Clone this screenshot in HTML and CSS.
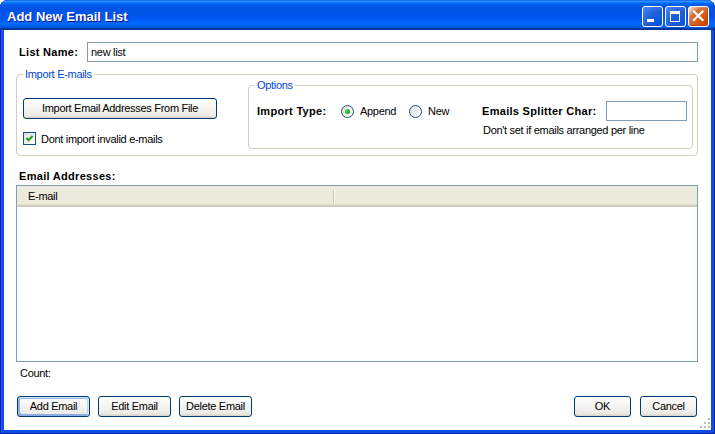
FILE: index.html
```html
<!DOCTYPE html>
<html>
<head>
<meta charset="utf-8">
<title>Add New Email List</title>
<link rel="stylesheet" href="styles.css">
</head>
<body>
<div class="window">
  <div class="titlebar">
    <span class="title">Add New Email List</span>
    <div class="controls">
      <button class="tbtn blue" aria-label="Minimize"><svg width="19" height="19" viewBox="0 0 19 19"><rect x="4" y="12" width="7" height="3" fill="#fff"/></svg></button>
      <button class="tbtn blue" aria-label="Maximize"><svg width="19" height="19" viewBox="0 0 19 19"><path d="M4 4h10v11H4z M5 7v7h8V7z" fill="#fff" fill-rule="evenodd"/></svg></button>
      <button class="tbtn red" aria-label="Close"><svg width="19" height="19" viewBox="0 0 19 19"><path d="M5 4.5L13.5 13 M13.5 4.5L5 13" stroke="#fff" stroke-width="2.2" stroke-linecap="square"/></svg></button>
    </div>
  </div>
  <div class="client">
    <div class="name-row">
      <span class="bold name-label">List Name:</span>
      <input class="txt name-input" type="text" value="new list">
    </div>

    <fieldset class="group import">
      <legend>Import E-mails</legend>
      <div class="import-body">
        <div class="import-left">
          <button class="btn import-btn">Import Email Addresses From File</button>
          <div class="check-row">
            <span class="checkbox"><svg width="11" height="11" viewBox="0 0 11 11"><path d="M2.5 5L4.5 7.2L8.6 3" fill="none" stroke="#21a121" stroke-width="2"/></svg></span>
            <span>Dont import invalid e-mails</span>
          </div>
        </div>
        <fieldset class="group options">
          <legend>Options</legend>
          <div class="opt-body">
            <div class="opt-left">
              <span class="bold type-label">Import Type:</span>
              <span class="radio-opt append"><span class="radio checked"></span><span>Append</span></span>
              <span class="radio-opt"><span class="radio"></span><span>New</span></span>
            </div>
            <div class="opt-right">
              <div class="split-row">
                <span class="bold split-label">Emails Splitter Char:</span>
                <input class="txt splitter" type="text" value="">
              </div>
              <div class="hint">Don't set if emails arranged per line</div>
            </div>
          </div>
        </fieldset>
      </div>
    </fieldset>

    <div class="bold section-label">Email Addresses:</div>
    <div class="listview">
      <div class="lv-header">
        <div class="col">E-mail</div>
        <div class="col-div"></div>
      </div>
      <div class="lv-body"></div>
    </div>
    <div class="count">Count:</div>

    <div class="btn-row">
      <div class="btn-group left">
        <button class="btn act default">Add Email</button>
        <button class="btn act">Edit Email</button>
        <button class="btn act">Delete Email</button>
      </div>
      <div class="btn-group right">
        <button class="btn dlg">OK</button>
        <button class="btn dlg">Cancel</button>
      </div>
    </div>

    <svg class="grip" width="11" height="11" viewBox="0 0 11 11">
      <g fill="#fff">
        <rect x="9" y="1" width="2" height="2"/>
        <rect x="5" y="5" width="2" height="2"/><rect x="9" y="5" width="2" height="2"/>
        <rect x="1" y="9" width="2" height="2"/><rect x="5" y="9" width="2" height="2"/><rect x="9" y="9" width="2" height="2"/>
      </g>
      <g fill="#c1beb0">
        <rect x="8" y="0" width="2" height="2"/>
        <rect x="4" y="4" width="2" height="2"/><rect x="8" y="4" width="2" height="2"/>
        <rect x="0" y="8" width="2" height="2"/><rect x="4" y="8" width="2" height="2"/><rect x="8" y="8" width="2" height="2"/>
      </g>
    </svg>
  </div>
</div>
</body>
</html>
```
FILE: styles.css
```css
html, body {
  margin: 0;
  padding: 0;
  background: #ffffff;
}

body {
  font-family: "Liberation Sans", Arial, sans-serif;
  font-size: 11px;
  letter-spacing: -0.3px;
  color: #000;
}

.window {
  width: 715px;
  height: 434px;
  display: flex;
  flex-direction: column;
  background: #0b4fe4;
  border-radius: 8px 8px 0 0;
  overflow: hidden;
  box-shadow: inset 1px 0 #0019cf, inset -1px 0 #001ea0, inset 0 -1px #001ea0, inset 2px 0 #1a63f0;
}

.titlebar {
  flex: none;
  height: 30px;
  box-sizing: border-box;
  padding: 2px 6px 0 7px;
  display: flex;
  align-items: center;
  background: linear-gradient(180deg, #0058ee 0%, #3593ff 4%, #288eff 6%, #127dff 8%, #036ffc 10%, #0262ee 14%, #0057e5 20%, #0054e3 24%, #0055eb 56%, #005bf5 66%, #026afe 76%, #0062ef 86%, #0052d6 92%, #0040ab 94%, #003092 100%);
}

.title {
  flex: 1;
  color: #fff;
  font-weight: bold;
  font-size: 13px;
  letter-spacing: 0;
  text-shadow: 1px 1px #0f1089;
}

.controls {
  display: flex;
  gap: 2px;
}

.tbtn {
  width: 21px;
  height: 21px;
  box-sizing: border-box;
  padding: 0;
  margin: 0;
  border: 1px solid #fff;
  border-radius: 3px;
  display: flex;
  align-items: center;
  justify-content: center;
}

.tbtn svg {
  display: block;
}

.tbtn.blue {
  background: radial-gradient(circle at 90% 90%, #0054e9 0%, #2263d5 55%, #4480ff 90%, #6b9cf9 100%);
  box-shadow: inset -1px -1px 1px #1d4fc4;
}

.tbtn.red {
  background: radial-gradient(circle at 90% 90%, #cc4600 0%, #dc6527 55%, #cd7546 68%, #ffccb2 90%, #ffffff 100%);
  box-shadow: inset -1px -1px 1px #b53e12;
}

.client {
  flex: 1;
  margin: 0 4px 4px 4px;
  background: #fff;
  box-sizing: border-box;
  padding: 12px 13px 13px 12px;
  display: flex;
  flex-direction: column;
  position: relative;
  min-height: 0;
}

.bold {
  font-weight: bold;
  letter-spacing: 0.3px;
}

.name-row {
  display: flex;
  align-items: center;
  height: 20px;
  flex: none;
}

.name-label {
  width: 68px;
  margin-left: 3px;
  flex: none;
}

.txt {
  box-sizing: border-box;
  height: 20px;
  margin: 0;
  border: 1px solid #7f9db9;
  padding: 0 3px 1px 3px;
  font: inherit;
  letter-spacing: -0.3px;
  color: #000;
  background: #fff;
  outline: none;
}

.name-input {
  flex: 1;
  min-width: 0;
}

.group {
  margin: 0;
  min-width: 0;
  border: 1px solid #d0d0bf;
  border-radius: 4px;
}

.group > legend {
  padding: 0 2px;
  line-height: 11px;
  color: #0046d5;
}

.import {
  flex: none;
  margin-top: 7px;
  padding: 0 4px 6px 6px;
}

.import-body {
  display: flex;
}

.import-left {
  width: 225px;
  flex: none;
  display: flex;
  flex-direction: column;
  align-items: flex-start;
}

.btn {
  box-sizing: border-box;
  height: 21px;
  margin: 0;
  padding: 0 0 1px 0;
  border: 1px solid #003c74;
  border-radius: 3px;
  background: linear-gradient(180deg, #ffffff, #ecebe6 86%, #d6d0c5);
  font: inherit;
  letter-spacing: -0.3px;
  color: #000;
}

.import-btn {
  width: 194px;
  margin-top: 18px;
}

.check-row {
  margin-top: 13px;
  height: 13px;
  display: flex;
  align-items: center;
  gap: 5px;
}

.checkbox {
  width: 13px;
  height: 13px;
  box-sizing: border-box;
  border: 1px solid #1c5180;
  background: linear-gradient(135deg, #dcdcd7, #ffffff);
  display: flex;
}

.checkbox svg {
  display: block;
}

.options {
  flex: 1;
  padding: 10px 4px 11px 8px;
}

.options > legend {
  margin-left: -2px;
}

.opt-body {
  display: flex;
}

.opt-left {
  width: 225px;
  flex: none;
  height: 20px;
  display: flex;
  align-items: center;
}

.type-label {
  width: 84px;
  flex: none;
}

.radio-opt {
  display: flex;
  align-items: center;
  gap: 6px;
}

.radio-opt.append {
  width: 68px;
}

.radio {
  width: 13px;
  height: 13px;
  box-sizing: border-box;
  border: 1px solid #1c5180;
  border-radius: 50%;
  background: linear-gradient(135deg, #dcdcd7, #ffffff);
  display: flex;
  align-items: center;
  justify-content: center;
}

.radio.checked::after {
  content: "";
  width: 5px;
  height: 5px;
  border-radius: 50%;
  background: radial-gradient(circle at 35% 35%, #4fd84f, #0a910a);
}

.opt-right {
  display: flex;
  flex-direction: column;
}

.split-row {
  display: flex;
  align-items: center;
  height: 20px;
}

.split-label {
  width: 124px;
  flex: none;
}

.splitter {
  width: 81px;
}

.hint {
  margin-top: 3px;
  margin-left: 1px;
  line-height: 13px;
}

.section-label {
  flex: none;
  margin-top: 14px;
  margin-left: 3px;
  line-height: 13px;
}

.listview {
  flex: 1;
  margin-top: 2px;
  border: 1px solid #7f9db9;
  display: flex;
  flex-direction: column;
  min-height: 0;
}

.lv-header {
  flex: none;
  height: 21px;
  box-sizing: border-box;
  display: flex;
  background: #ebeadb;
  box-shadow: inset 0 -1px #cbc7b8, inset 0 -2px #d6d2c2, inset 0 -3px #e2decd;
}

.col {
  width: 316px;
  box-sizing: border-box;
  padding-left: 11px;
  line-height: 20px;
}

.col-div {
  width: 2px;
  height: 13px;
  margin-top: 4px;
  background: linear-gradient(90deg, #c7c5b2 50%, #ffffff 50%);
}

.lv-body {
  flex: 1;
  background: #fff;
}

.count {
  flex: none;
  margin-top: 5px;
  margin-left: 4px;
  line-height: 13px;
}

.btn-row {
  flex: none;
  margin-top: 16px;
  display: flex;
  height: 21px;
}

.btn-group {
  display: flex;
}

.btn-group.left {
  margin-left: 1px;
  gap: 8px;
}

.btn-group.right {
  margin-left: auto;
  margin-right: 1px;
  gap: 9px;
}

.act {
  width: 73px;
}

.dlg {
  width: 57px;
}

.btn.default {
  box-shadow: inset -1px 1px #cee7ff, inset 1px 2px #98b8ea, inset -2px 2px #bcd4f6, inset 1px -1px #89ade4, inset 2px -2px #89ade4;
}

.grip {
  position: absolute;
  right: 0;
  bottom: 1px;
  display: block;
}
```
